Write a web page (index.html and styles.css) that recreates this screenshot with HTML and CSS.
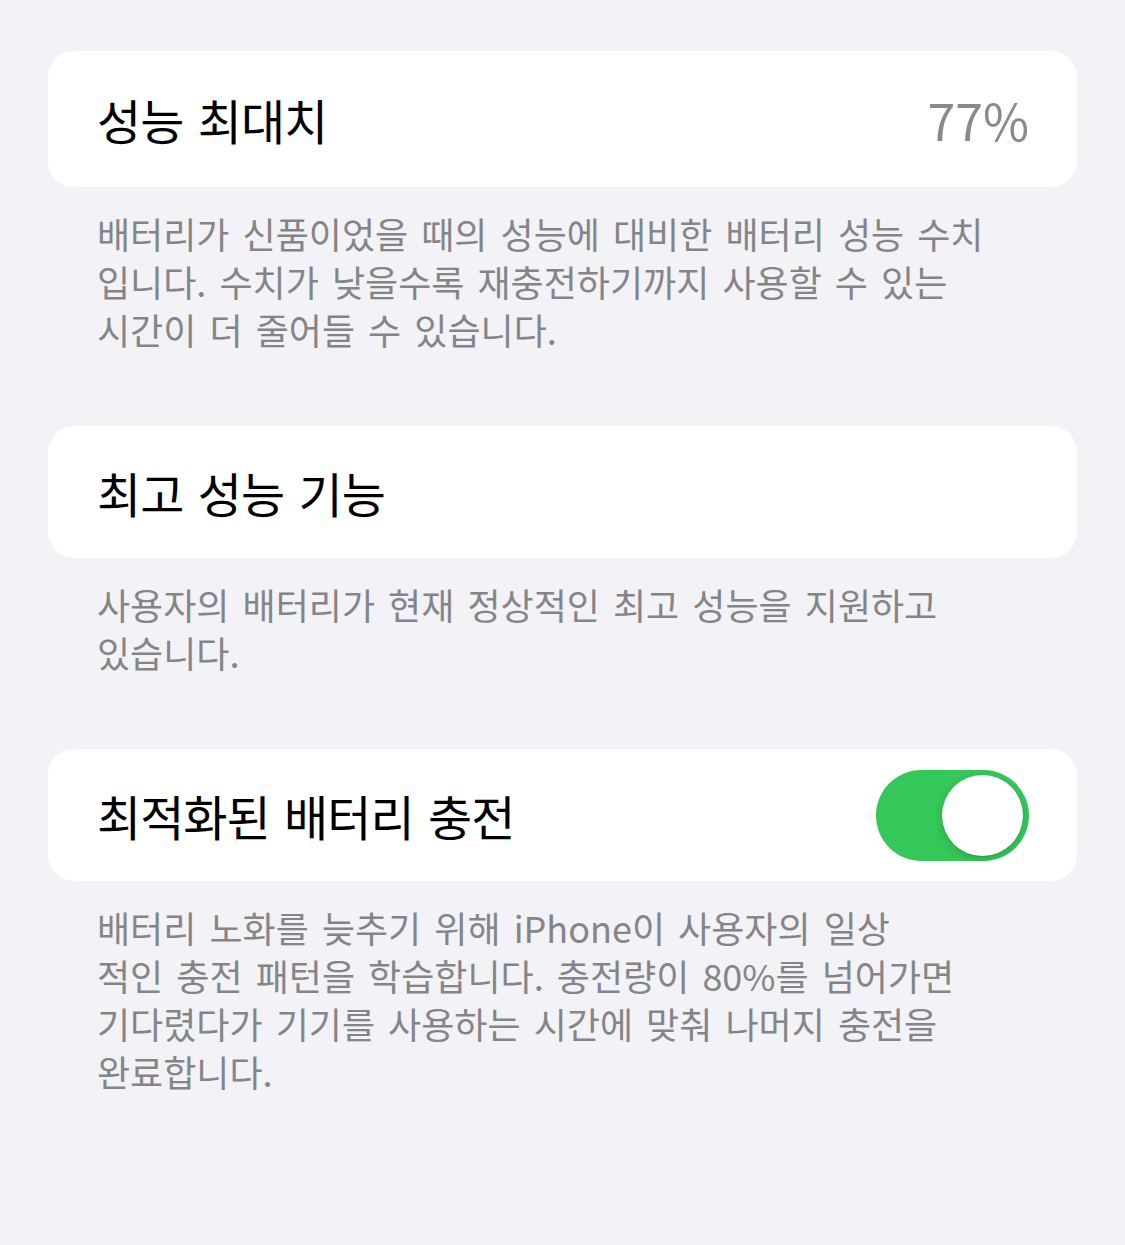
FILE: index.html
```html
<!DOCTYPE html>
<html lang="ko">
<head>
<meta charset="utf-8">
<link rel="stylesheet" href="styles.css">
</head>
<body>
<main class="page">
  <section class="group">
    <div class="card card-tall">
      <span class="title">성능 최대치</span>
      <span class="value">77%</span>
    </div>
    <p class="footer">배터리가 신품이었을 때의 성능에 대비한 배터리 성능 수치<br>입니다. 수치가 낮을수록 재충전하기까지 사용할 수 있는<br>시간이 더 줄어들 수 있습니다.</p>
  </section>
  <section class="group">
    <div class="card">
      <span class="title">최고 성능 기능</span>
    </div>
    <p class="footer">사용자의 배터리가 현재 정상적인 최고 성능을 지원하고<br>있습니다.</p>
  </section>
  <section class="group">
    <div class="card">
      <span class="title">최적화된 배터리 충전</span>
      <span class="switch" role="switch" aria-checked="true"><span class="knob"></span></span>
    </div>
    <p class="footer">배터리 노화를 늦추기 위해 <span class="latin">iPhone</span>이 사용자의 일상<br>적인 충전 패턴을 학습합니다. 충전량이 <span class="latin">80%</span>를 넘어가면<br>기다렸다가 기기를 사용하는 시간에 맞춰 나머지 충전을<br>완료합니다.</p>
  </section>
</main>
</body>
</html>
```
FILE: styles.css
```css
html, body {
  margin: 0;
  padding: 0;
  background: #f2f2f7;
}
body {
  font-family: "Noto Sans CJK KR", "Noto Sans", sans-serif;
  width: 1125px;
  height: 1245px;
  overflow: hidden;
}
.page {
  display: flex;
  flex-direction: column;
  padding: 51px 48px 0 48px;
}
.group {
  display: flex;
  flex-direction: column;
  margin-bottom: 73px;
}
.card {
  background: #ffffff;
  border-radius: 26px;
  height: 132px;
  display: flex;
  align-items: center;
  justify-content: space-between;
  padding: 0 48px 0 49px;
  box-sizing: border-box;
}
.card-tall {
  height: 136px;
}
.title {
  font-size: 48px;
  letter-spacing: -1px;
  word-spacing: 2px;
  color: #000000;
  line-height: 1;
}
.value {
  font-size: 50px;
  color: #8a8a8e;
  line-height: 1;
  letter-spacing: 0;
}
.footer {
  margin: 22px 0 0 0;
  padding: 0 20px 0 49px;
  font-size: 36px;
  line-height: 48px;
  letter-spacing: 0;
  word-spacing: 3px;
  color: #858589;
  white-space: nowrap;
}
.switch {
  position: relative;
  width: 153px;
  height: 91px;
  border-radius: 46px;
  background: #34c759;
  flex: none;
}
.knob {
  position: absolute;
  top: 5px;
  right: 6px;
  width: 81px;
  height: 81px;
  border-radius: 50%;
  background: #ffffff;
  box-shadow: 0 3px 8px rgba(0, 0, 0, 0.15), 0 1px 1px rgba(0, 0, 0, 0.1);
}
```
